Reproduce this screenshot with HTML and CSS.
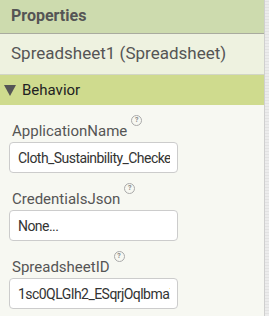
FILE: index.html
```html
<!DOCTYPE html>
<html>
<head>
    <title>Properties</title>
    <link rel="stylesheet" href="styles.css">
</head>
<body>
    <div class="panel">
        <div class="properties">
            <div class="panel-title">Properties</div>
            <div class="component-name">Spreadsheet1 (Spreadsheet)</div>
            <div class="category">
                <span class="arrow"></span>
                <span>Behavior</span>
            </div>

            <div class="property">
                <div class="label">ApplicationName<span class="help">?</span></div>
                <input class="text-box" type="text" value="Cloth_Sustainbility_Checker">
            </div>

            <div class="property">
                <div class="label">CredentialsJson<span class="help">?</span></div>
                <input class="text-box" type="text" value="None...">
            </div>

            <div class="property">
                <div class="label">SpreadsheetID<span class="help">?</span></div>
                <input class="text-box" type="text" value="1sc0QLGIh2_ESqrjOqlbmaXk">
            </div>
        </div>
        <div class="scroll-track"></div>
    </div>
</body>
</html>
```

FILE: styles.css
```css
body {
    margin: 0;
    padding: 0;
    font-family: Roboto, 'Liberation Sans', sans-serif;
    background: #f7f8f2;
    overflow: hidden;
}

.panel {
    display: flex;
    height: 316px;
}

.properties {
    flex: 1;
    background: #f7f8f2;
    border-right: 1px solid #cfcfcf;
}

.scroll-track {
    width: 4px;
    background: repeating-linear-gradient(0deg, #ececec 0px, #ececec 2px, #e2e2e2 2px, #e2e2e2 3px);
}

.panel-title {
    height: 34px;
    box-sizing: border-box;
    padding: 6px 0 0 11px;
    background: #cddbae;
    border-bottom: 1px solid #a9ab9f;
    color: #555;
    font-size: 16px;
    font-weight: bold;
}

.component-name {
    height: 41px;
    box-sizing: border-box;
    padding: 9px 0 0 11px;
    background: #eef2e0;
    border-bottom: 1px solid #d2d6c6;
    color: #555;
    font-size: 17px;
}

.category {
    height: 30px;
    box-sizing: border-box;
    padding: 6px 0 0 4px;
    display: flex;
    align-items: flex-start;
    background: #cfdb8e;
    color: #222;
    font-size: 15px;
}

.arrow {
    width: 0;
    height: 0;
    margin: 4px 6px 0 0;
    border-left: 6px solid transparent;
    border-right: 6px solid transparent;
    border-top: 11px solid #555;
}

.property {
    padding: 0 0 0 9px;
}

.label {
    margin: 18px 0 3px 3px;
    height: 16px;
    color: #555;
    font-size: 15px;
    line-height: 16px;
}

.help {
    display: inline-block;
    position: relative;
    top: -8px;
    width: 9px;
    height: 9px;
    margin-left: 4px;
    border: 1px solid #aaa;
    border-radius: 50%;
    color: #888;
    font-size: 7px;
    font-weight: bold;
    line-height: 9px;
    text-align: center;
    vertical-align: top;
}

.text-box {
    display: block;
    width: 169px;
    height: 31px;
    box-sizing: border-box;
    padding: 0 7px 0 8px;
    border: 1px solid #ccc;
    border-radius: 4px;
    background: #fff;
    color: #333;
    font-family: Roboto, 'Liberation Sans', sans-serif;
    font-size: 14px;
    letter-spacing: -0.55px;
    outline: none;
}
```
